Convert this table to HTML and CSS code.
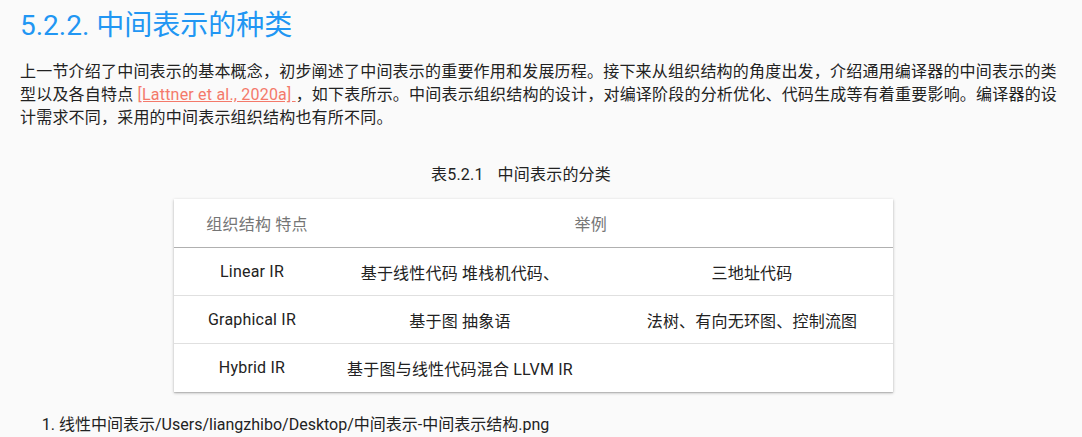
FILE: index.html
```html
<!DOCTYPE html>
<html lang="zh-CN">
<head>
  <meta charset="UTF-8" />
  <meta name="viewport" content="width=device-width, initial-scale=1.0" />
  <title>5.2.2. 中间表示的种类</title>
  <link rel="stylesheet" href="styles.css">
</head>
<body>
  <div class="content">
    <h2 class="section-title">5.2.2. 中间表示的种类</h2>

    <p class="text">上一节介绍了中间表示的基本概念，初步阐述了中间表示的重要作用和发展历程。接下来从组织结构的角度出发，介绍通用编译器的中间表示的类型以及各自特点 <a class="cite" href="#lattner">[Lattner et al., 2020a] </a>，如下表所示。中间表示组织结构的设计，对编译阶段的分析优化、代码生成等有着重要影响。编译器的设计需求不同，采用的中间表示组织结构也有所不同。</p>

    <div class="table-wrap">
      <p class="caption"><span class="caption-num">表5.2.1</span>中间表示的分类</p>
      <table class="ir-table">
        <colgroup>
          <col class="col-name" />
          <col class="col-feature" />
          <col class="col-example" />
        </colgroup>
        <thead>
          <tr>
            <th class="head-name">组织结构 特点</th>
            <th class="head-example">举例</th>
            <th></th>
          </tr>
        </thead>
        <tbody>
          <tr>
            <td>Linear IR</td>
            <td class="feature">基于线性代码 堆栈机代码、</td>
            <td class="example">三地址代码</td>
          </tr>
          <tr>
            <td>Graphical IR</td>
            <td class="feature">基于图 抽象语</td>
            <td class="example">法树、有向无环图、控制流图</td>
          </tr>
          <tr>
            <td>Hybrid IR</td>
            <td class="feature">基于图与线性代码混合 LLVM IR</td>
            <td class="example"></td>
          </tr>
        </tbody>
      </table>
    </div>

    <ol class="figures">
      <li>线性中间表示/Users/liangzhibo/Desktop/中间表示-中间表示结构.png</li>
    </ol>
  </div>
</body>
</html>
```

FILE: styles.css
```css
body {
  margin: 0;
  background-color: #fafafa;
  color: #222;
  font-family: Roboto, "Noto Sans CJK SC", sans-serif;
  letter-spacing: 0.2px;
}
.content {
  padding: 0 20px;
}
.section-title {
  margin: 0;
  padding-top: 8px;
  font-size: 28px;
  font-weight: 400;
  line-height: 36px;
  letter-spacing: 0;
  color: #2196f3;
}
.text {
  margin: 16px 0 0;
  font-size: 16px;
  line-height: 23px;
}
.cite {
  color: #f4796a;
  text-decoration: underline;
}
.table-wrap {
  margin-top: 36px;
}
.caption {
  margin: 0 0 14px;
  text-align: center;
  font-size: 16px;
  line-height: 20px;
  padding-right: 40px;
}
.caption-num {
  margin-right: 14px;
}
.ir-table {
  margin-left: 154px;
  width: 719px;
  border-collapse: collapse;
  table-layout: fixed;
  background: #fff;
  box-shadow: 0 1px 3px rgba(0, 0, 0, 0.25), 0 1px 1px rgba(0, 0, 0, 0.12);
  font-size: 16px;
}
.col-name {
  width: 156px;
}
.col-feature {
  width: 290px;
}
.ir-table th {
  height: 48px;
  font-weight: 400;
  color: #757575;
  border-bottom: 1px solid #b0b0b0;
  padding: 0;
}
.ir-table th.head-name {
  text-align: center;
  padding-left: 10px;
}
.ir-table th.head-example {
  text-align: right;
  padding-right: 13px;
}
.ir-table td {
  height: 47px;
  padding: 0;
  text-align: center;
  border-bottom: 1px solid #e0e0e0;
}
.ir-table tr:last-child td {
  border-bottom-color: transparent;
}
.ir-table td.feature {
  padding-right: 30px;
}
.ir-table td.example {
  padding-right: 9px;
}
.figures {
  margin: 22px 0 0;
  padding-left: 39px;
  font-size: 16px;
  line-height: 22px;
  letter-spacing: 0;
}
```
